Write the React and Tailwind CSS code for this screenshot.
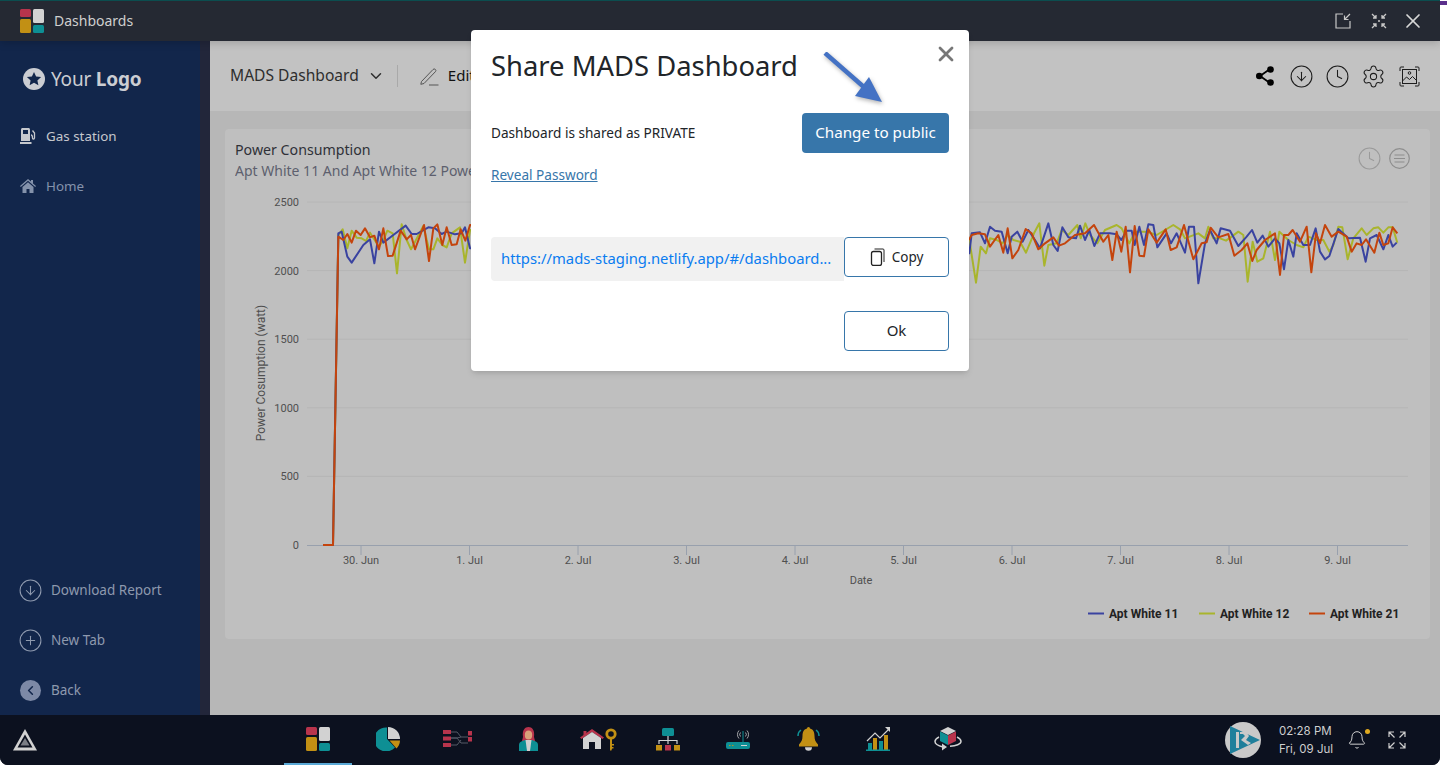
import React from "react";
import { ChevronDown, Clock, CircleArrowDown, Settings, CirclePlus, ChevronLeft, Bell, X } from "lucide-react";

const conv = (pts, ox) => pts.map(([x, y]) => [ox + x / 3, 190 + y / 3]);
const L = {
  orange: [[325,140],[340,150],[352,132],[365,158],[378,122],[392,135],[405,115],[420,142],[433,137],[447,178],[460,115],[474,198],[488,197],[512,122],[530,148],[543,135],[555,178],[582,105],[597,213],[610,115],[622,103],[637,165],[650,112],[665,165],[680,163],[692,118],[706,152],[720,105]],
  blue: [[325,130],[335,125],[352,200],[365,218],[400,165],[420,148],[433,220],[447,125],[460,158],[490,135],[527,107],[545,132],[560,132],[595,112],[615,115],[635,132],[650,125],[675,133],[695,130],[705,112],[720,175]],
  green: [[325,135],[338,118],[352,175],[365,122],[380,143],[395,145],[408,153],[420,128],[447,170],[460,150],[472,122],[488,130],[501,250],[515,103],[530,150],[543,178],[558,150],[580,108],[597,178],[610,178],[622,145],[637,165],[650,172],[665,130],[690,112],[705,218],[720,120]],
};
const R = {
  orange: [[28,148],[35,135],[55,130],[75,133],[90,170],[115,135],[130,188],[143,115],[157,205],[175,180],[197,117],[215,130],[235,178],[255,160],[280,142],[297,167],[315,160],[345,135],[375,130],[402,105],[430,155],[445,135],[457,210],[470,125],[484,185],[497,110],[510,247],[524,108],[538,197],[552,199],[565,118],[590,158],[617,118],[632,180],[650,172],[672,105],[700,208],[725,160],[740,157],[752,113],[775,142],[805,132],[823,197],[845,180],[862,160],[877,213],[890,180],[915,150],[945,130],[960,255],[972,135],[985,135],[998,120],[1020,155],[1040,110],[1054,247],[1068,130],[1080,160],[1095,105],[1115,140],[1135,125],[1160,140],[1175,185],[1190,160],[1205,165],[1218,148],[1243,188],[1258,128],[1270,165],[1285,160],[1298,112],[1312,130]],
  blue: [[28,190],[35,130],[60,127],[75,160],[90,110],[105,122],[125,125],[143,190],[155,140],[172,125],[188,155],[205,120],[225,150],[240,175],[265,100],[280,165],[293,183],[307,112],[325,142],[348,145],[360,107],[375,150],[388,120],[403,168],[420,130],[450,130],[470,133],[484,150],[500,122],[515,122],[524,165],[538,110],[552,165],[565,103],[580,105],[592,172],[620,130],[633,160],[650,130],[675,188],[687,110],[702,110],[715,280],[735,160],[750,120],[770,160],[782,115],[810,122],[835,168],[860,140],[876,120],[892,158],[908,137],[925,170],[945,145],[958,160],[972,238],[985,150],[1000,200],[1010,130],[1030,165],[1050,165],[1067,115],[1080,185],[1095,208],[1108,198],[1135,117],[1165,145],[1200,143],[1217,215],[1230,145],[1250,135],[1270,178],[1285,135],[1298,170],[1310,158]],
  green: [[28,150],[48,278],[62,170],[78,190],[90,145],[110,150],[128,160],[143,135],[160,150],[180,155],[198,188],[222,130],[238,100],[253,227],[265,165],[290,160],[305,120],[325,135],[352,105],[362,145],[376,100],[390,135],[412,160],[435,120],[470,105],[485,115],[508,160],[525,125],[560,125],[590,135],[640,105],[660,118],[675,145],[715,130],[735,145],[745,110],[760,145],[780,145],[798,152],[815,140],[835,125],[850,135],[863,275],[878,155],[892,215],[910,205],[930,125],[945,210],[958,125],[985,150],[1010,165],[1030,172],[1045,140],[1070,150],[1090,150],[1108,185],[1120,165],[1135,110],[1147,112],[1163,208],[1180,145],[1205,115],[1220,135],[1240,115],[1255,112],[1270,128],[1285,112],[1298,112],[1312,158]],
};
const series = (k) => {
  const start = [[323, 545], [333, 545]];
  return [...start, ...conv(L[k], 230), ...conv(R[k], 960)].map((p) => p.join(",")).join(" ");
};

function Chart() {
  const grid = [[2500, 202], [2000, 270.6], [1500, 339.2], [1000, 407.8], [500, 476.4]];
  const ticks = ["30. Jun", "1. Jul", "2. Jul", "3. Jul", "4. Jul", "5. Jul", "6. Jul", "7. Jul", "8. Jul", "9. Jul"];
  const lab = { fontFamily: "Roboto, sans-serif", fontSize: 11, fill: "#4f4f4f" };
  return (
    <svg viewBox="225 190 1205 449" width="1205" height="449" className="block">
      {grid.map(([v, y]) => (
        <g key={v}>
          <line x1="307" x2="1408" y1={y} y2={y} stroke="#b6b6b6" strokeWidth="1" />
          <text x="299" y={y + 4} textAnchor="end" {...lab}>{v}</text>
        </g>
      ))}
      <text x="299" y="549" textAnchor="end" {...lab}>0</text>
      <line x1="307" x2="1408" y1="545.5" y2="545.5" stroke="#98a0ad" strokeWidth="1" />
      {ticks.map((t, i) => {
        const x = 361 + i * 108.5;
        return (
          <g key={t}>
            <line x1={x} x2={x} y1="545" y2="555" stroke="#98a0ad" strokeWidth="1" />
            <text x={x} y="564" textAnchor="middle" {...lab}>{t}</text>
          </g>
        );
      })}
      <text x="861" y="584" textAnchor="middle" {...lab}>Date</text>
      <text transform="translate(265 373) rotate(-90)" textAnchor="middle" {...lab} fontSize="12">Power Cosumption (watt)</text>
      <polyline points={series("green")} fill="none" stroke="#a9b52c" strokeWidth="2" strokeLinejoin="round" />
      <polyline points={series("blue")} fill="none" stroke="#3a43a0" strokeWidth="2" strokeLinejoin="round" />
      <polyline points={series("orange")} fill="none" stroke="#c4440d" strokeWidth="2" strokeLinejoin="round" />
      {[[1088, "#3a43a0", "Apt White 11"], [1199, "#a9b52c", "Apt White 12"], [1309, "#c4440d", "Apt White 21"]].map(([x, c, t]) => (
        <g key={t}>
          <line x1={x} x2={x + 16} y1="613.5" y2="613.5" stroke={c} strokeWidth="2" />
          <text x={x + 21} y="618" fontFamily="Roboto, sans-serif" fontSize="12" fontWeight="700" fill="#222">{t}</text>
        </g>
      ))}
    </svg>
  );
}

const DashIcon = ({ s = 24 }) => (
  <svg width={s} height={s} viewBox="0 0 24 24">
    <rect x="0" y="0" width="11" height="8" rx="1.500" fill="#b8344c" />
    <rect x="0" y="10" width="11" height="14" rx="1.500" fill="#c29014" />
    <rect x="13" y="0" width="11" height="14" rx="1.500" fill="#d2d2d2" />
    <rect x="13" y="16" width="11" height="8" rx="1.500" fill="#0e8f94" />
  </svg>
);
const Pie = () => (
  <svg width="24" height="24" viewBox="0 0 24 24">
    <path d="M11 0.500V12l8 8.500A12 12 0 1 1 11 0.500Z" fill="#0e8f94" />
    <path d="M12 0a12 12 0 0 1 12 12H12Z" fill="#d2d2d2" />
    <path d="M13.500 13.500H24a12 12 0 0 1-3.500 8Z" fill="#c29014" />
  </svg>
);
const Flow = () => (
  <svg width="30" height="18" viewBox="0 0 30 18">
    <g fill="none" stroke="#555a66" strokeWidth="1">
      <path d="M8 2h6l4 5h7M8 8h6l4-1M8 8h6l4 5h7M8 15h6l4-5" />
    </g>
    <g fill="#b8344c">
      <rect x="0" y="0" width="8" height="4" />
      <rect x="0" y="6.500" width="8" height="4" />
      <rect x="0" y="13" width="8" height="4" />
      <rect x="25" y="1" width="4" height="4.500" />
      <rect x="25" y="7" width="4" height="4.500" />
    </g>
  </svg>
);
const Woman = () => (
  <svg width="19" height="24" viewBox="0 0 19 24">
    <path d="M4 10C3 3 6 0 9.500 0S16 3 15 10l1 4H3Z" fill="#b8344c" />
    <ellipse cx="9.500" cy="8" rx="3.700" ry="4.500" fill="#d9a27a" />
    <path d="M0 24v-6c0-3 3-4 6-5h7c3 1 6 2 6 5v6Z" fill="#0e8f94" />
    <path d="M6.500 13h6L11 24H8Z" fill="#d2d2d2" />
  </svg>
);
const HomeKey = () => (
  <svg width="37" height="24" viewBox="0 0 37 24">
    <path d="M0 10.500 12 2l12 8.500-1.500 1.500L12 5 1.500 12Z" fill="#b8344c" />
    <path d="M3 11 12 5l9 6v11h-6v-7H9v7H3Z" fill="#d2d2d2" />
    <path d="M3.500 4h3v2.500l-3 2.200Z" fill="#b8344c" />
    <circle cx="31" cy="7" r="4.200" fill="none" stroke="#c29014" strokeWidth="2.800" />
    <path d="M30 11h2v11l-1 2-1-1Zm2 6h2v1.500h-2Zm0 3h1.500v1.500H32Z" fill="#c29014" />
  </svg>
);
const Org = () => (
  <svg width="24" height="23" viewBox="0 0 24 23">
    <rect x="6" y="0" width="12" height="8" rx="1.500" fill="#0e8f94" />
    <path d="M12 8v8M3 16v-3.500h18V16" stroke="#d2d2d2" strokeWidth="1.200" fill="none" />
    <rect x="0" y="17" width="6" height="5.500" fill="#c29014" />
    <rect x="9" y="17" width="6" height="5.500" fill="#b8344c" />
    <rect x="18" y="17" width="6" height="5.500" fill="#c29014" />
  </svg>
);
const Router = () => (
  <svg width="24" height="20" viewBox="0 0 24 20">
    <rect x="0" y="13" width="24" height="7" rx="2" fill="#0e8f94" />
    <path d="M17 2v11" stroke="#0e8f94" strokeWidth="1" />
    <g fill="none" stroke="#c8c8c8" strokeWidth="0.800">
      <path d="M14.500 3.500a3 3 0 0 0 0 4M19.500 3.500a3 3 0 0 1 0 4M13 1.500a6 6 0 0 0 0 8M21 1.500a6 6 0 0 1 0 8" />
    </g>
    <path d="M15 16.500h6" stroke="#d2d2d2" strokeWidth="1" />
    <path d="M3 16.500h1.500M6 16.500h1.500" stroke="#c29014" strokeWidth="1" />
  </svg>
);
const AlarmBell = () => (
  <svg width="23" height="24" viewBox="0 0 23 24">
    <path d="M1 9a7 7 0 0 1 3-6M22 9a7 7 0 0 0-3-6" fill="none" stroke="#0e8f94" strokeWidth="1.500" />
    <path d="M11.500 0c1 0 1.500 .8 1.500 1.600 3.500 .8 4.500 4 4.500 7.400 0 4 1 5.500 3.500 8.500v2H2v-2C4.500 14.500 5.500 13 5.500 9c0-3.400 1-6.600 4.500-7.400 0-.8 .5-1.600 1.500-1.600Z" fill="#c29014" />
    <path d="M8 20.200h7a3.500 3.500 0 0 1-7 0Z" fill="#d2d2d2" />
  </svg>
);
const Growth = () => (
  <svg width="24" height="24" viewBox="0 0 24 24">
    <path d="M1 14 9 6l5 5 9-9" fill="none" stroke="#d2d2d2" strokeWidth="1.200" />
    <path d="M19 0h5v5Z" fill="#d2d2d2" />
    <rect x="2" y="16" width="4" height="7" fill="#0e8f94" />
    <rect x="7" y="11" width="4" height="12" fill="#c29014" />
    <rect x="13" y="14" width="4" height="9" fill="#0e8f94" />
    <rect x="18" y="8" width="4" height="15" fill="#c29014" />
    <rect x="0" y="22.500" width="24" height="1.500" fill="#0e8f94" />
  </svg>
);
const Cube = () => (
  <svg width="28" height="24" viewBox="0 0 28 24">
    <path d="M14 0 22 4 14 8 6 4Z" fill="#d2d2d2" />
    <path d="M6 4.500 14 8.500V18L6 14Z" fill="#0e8f94" />
    <path d="M22 4.500 14 8.500V18l8-4Z" fill="#b8344c" />
    <path d="M5 10C2 11.500 1 13 1 14.500 1 17 5 19 9 20M23 10c3 1.500 4 3 4 4.500 0 2.500-5 4.500-11 4.800" fill="none" stroke="#d2d2d2" strokeWidth="1.500" />
    <path d="M8 16.500 13 20 8 23.500Z" fill="#d2d2d2" />
  </svg>
);

const Tab = ({ active, children }) => (
  <div className={`h-full w-[68px] flex items-center justify-center border-b-2 ${active ? "border-[#5aa9d6]" : "border-transparent"}`}>
    {children}
  </div>
);

const SideItem = ({ icon, label, className = "" }) => (
  <div className={`h-[50px] flex items-center pl-5 ${className}`}>
    {icon}
    <span>{label}</span>
  </div>
);

export default function App() {
  const font = { fontFamily: '"Noto Sans", sans-serif' };
  return (
    <div className="relative w-[1447px] h-[768px] bg-white overflow-hidden" style={font}>
      <div className="absolute right-0 top-[1px] w-[7px] h-[4px] bg-[#5b2f8c]" />
      <div className="w-[1440px] h-[765px] flex flex-col rounded-b-[8px] overflow-hidden bg-[#0c111f]">
        <div className="h-[41px] shrink-0 bg-[#252933] border-t border-[#0b4d4f] flex items-center pl-5 pb-[1px] text-[#cfcfcf] relative z-10 shadow-[0_2px_8px_rgba(0,0,0,0.18)]">
          <DashIcon />
          <span className="ml-[10px] text-[14px] pb-[1px]">Dashboards</span>
          <div className="ml-auto flex items-center">
            <svg width="16" height="16" viewBox="0 0 16 16" fill="none" stroke="#c8c8c8" strokeWidth="1.200">
              <path d="M8 1H1v14h14V8M15 1 9.500 6.500M9.500 2.500v4h4" />
            </svg>
            <svg width="16" height="16" viewBox="0 0 16 16" fill="none" stroke="#c8c8c8" strokeWidth="1.300" className="ml-[20px]">
              <path d="M1 1l4 4M5 2v3H2M15 1l-4 4M11 2v3h3M1 15l4-4M5 14v-3H2M15 15l-4-4M11 14v-3h3" />
              <circle cx="8" cy="8" r="1" fill="#c8c8c8" stroke="none" />
            </svg>
            <X size={24} color="#d8d8d8" strokeWidth={1.700} className="ml-[14px] mr-[15px]" />
          </div>
        </div>

        <div className="flex-1 flex min-h-0">
          <aside className="w-[200px] shrink-0 bg-[#12264b] flex flex-col">
            <div className="h-[70px] flex items-center pl-[23px] pt-[6px] text-[#cbcdd2] text-[19px] gap-[6px]">
              <svg width="22" height="22" viewBox="0 0 22 22">
                <circle cx="11" cy="11" r="11" fill="#cbcdd2" />
                <path d="M11 4l2.100 4.600 5 .5-3.700 3.300 1 4.900L11 14.800l-4.400 2.500 1-4.900L3.900 9.100l5-.5Z" fill="#12264b" />
              </svg>
              <span className="tracking-[-0.2px]">Your <b className="font-bold">Logo</b></span>
            </div>
            <SideItem
              className="text-[#c6c8cd] text-[13.400px]"
              label="Gas station"
              icon={
                <svg width="16" height="16" viewBox="0 0 16 16" className="mr-[10px]">
                  <path d="M1 1.500C1 .7 1.700 0 2.500 0h6C9.300 0 10 .7 10 1.500V13H1Z" fill="#c6c8cd" />
                  <rect x="3" y="2" width="5" height="4" fill="#12264b" />
                  <rect x="0" y="14" width="11.500" height="2" fill="#c6c8cd" />
                  <path d="M11 7c1.500 0 1.500 1.500 1.500 3s1.500 1.500 2 0V5L12.500 2.500" fill="none" stroke="#c6c8cd" strokeWidth="1.300" />
                </svg>
              }
            />
            <SideItem
              className="text-[#8492ab] text-[13.400px]"
              label="Home"
              icon={
                <svg width="16" height="14" viewBox="0 0 16 14" className="mr-[10px]">
                  <path d="M0 7 8 0l3 2.600V1h2v3.400L16 7l-.8.900L8 1.800.8 7.900Z" fill="#8492ab" />
                  <path d="M2.500 8 8 3.300 13.500 8v6H9.500v-4h-3v4h-4Z" fill="#8492ab" />
                </svg>
              }
            />
            <div className="mt-auto text-[#8e99ae] text-[13.500px]">
              <SideItem label="Download Report" icon={<CircleArrowDown size={25} strokeWidth={1} className="-ml-[2px] mr-[8px]" />} />
              <SideItem label="New Tab" icon={<CirclePlus size={25} strokeWidth={1} className="-ml-[2px] mr-[8px]" />} />
              <SideItem
                label="Back"
                icon={
                  <span className="w-[21px] h-[21px] rounded-full bg-[#7d89a6] flex items-center justify-center mr-[10px]">
                    <ChevronLeft size={15} color="#12264b" strokeWidth={2.500} />
                  </span>
                }
              />
            </div>
          </aside>
          <div className="w-[10px] shrink-0 bg-[#22263a]" />
          <main className="flex-1 bg-[#b7b7b7] flex flex-col min-w-0">
            <div className="h-[70px] shrink-0 bg-[#c2c2c2] flex items-center pl-5 pr-[20px] text-[#2e2e2e]">
              <span className="text-[15.600px] pb-[1px]">MADS Dashboard</span>
              <ChevronDown size={18} strokeWidth={2} className="ml-[8px]" />
              <div className="w-px h-[22px] bg-[#a9a9a9] ml-[12px]" />
              <svg width="19" height="19" viewBox="0 0 19 19" fill="none" stroke="#555" strokeWidth="1" className="ml-[22px]">
                <path d="M1.500 14.500 13 2.500a1.600 1.600 0 0 1 2.400 2.200L4 16.500l-3.200.8ZM9 18h9.500" />
              </svg>
              <span className="ml-[9px] text-[15px] text-[#111] pb-[1px]">Edit</span>
              <div className="ml-auto flex items-center text-[#1d1d1d]">
                <svg width="18" height="20" viewBox="0 0 18 20" fill="#000">
                  <path d="M14 3 4 10l10 7" fill="none" stroke="#000" strokeWidth="1.800" />
                  <circle cx="14.500" cy="3.500" r="3.300" />
                  <circle cx="3.300" cy="10" r="3.300" />
                  <circle cx="14.500" cy="16.500" r="3.300" />
                </svg>
                <CircleArrowDown size={25} strokeWidth={1} className="ml-[15px]" />
                <Clock size={25} strokeWidth={1} className="ml-[11px]" />
                <Settings size={25} strokeWidth={1} className="ml-[11px]" />
                <svg width="21" height="21" viewBox="0 0 21 21" fill="none" stroke="#1d1d1d" strokeWidth="1" className="ml-[13px]">
                  <path d="M1 5V2a1 1 0 0 1 1-1h3M16 1h3a1 1 0 0 1 1 1v3M20 16v3a1 1 0 0 1-1 1h-3M5 20H2a1 1 0 0 1-1-1v-3" />
                  <rect x="3.500" y="3.500" width="14" height="14" />
                  <circle cx="10.500" cy="7" r="1.300" />
                  <path d="M3.500 15l4-4 3 2.500 3-3 4 4" />
                </svg>
              </div>
            </div>
            <div className="mt-[18px] ml-[15px] w-[1205px] h-[510px] bg-[#bfbfbf] rounded-[4px]">
              <div className="h-[61px] flex justify-between px-[10px] pt-[10px]">
                <div className="w-[236px]">
                  <div className="text-[14.200px] leading-[21px] text-[#2f3138]">Power Consumption</div>
                  <div className="text-[14px] leading-[21px] text-[#5d5f6e] whitespace-nowrap overflow-hidden">Apt White 11 And Apt White 12 Power Consumption</div>
                </div>
                <div className="flex items-center h-[21px] mr-[10px] mt-[9px] text-[#9a9a9a]">
                  <Clock size={25} strokeWidth={1} />
                  <svg width="21" height="21" viewBox="0 0 21 21" fill="none" stroke="#8e8e8e" strokeWidth="1.200" className="ml-[7px]">
                    <circle cx="10.500" cy="10.500" r="9.800" />
                    <path d="M5.500 7h10M5 10.500h11M5.500 14h10" />
                  </svg>
                </div>
              </div>
              <Chart />
            </div>
          </main>
        </div>

        <footer className="h-[50px] shrink-0 bg-[#0c111f] flex items-center">
          <div className="w-[284px] pl-[13px] shrink-0">
            <svg width="24" height="22" viewBox="0 0 24 22">
              <path d="M12 0 24 21.500H0Z" fill="#d2d2d2" />
              <path d="M12 5.500 19.500 18.500H4.500Z" fill="#0c111f" />
              <path d="M12 9 16.500 16.500H7.500Z" fill="#7a7d85" />
            </svg>
          </div>
          <div className="flex h-full gap-[2px]">
            <Tab active><DashIcon /></Tab>
            <Tab><Pie /></Tab>
            <Tab><Flow /></Tab>
            <Tab><Woman /></Tab>
            <Tab><HomeKey /></Tab>
            <Tab><Org /></Tab>
            <Tab><Router /></Tab>
            <Tab><AlarmBell /></Tab>
            <Tab><Growth /></Tab>
            <Tab><Cube /></Tab>
          </div>
          <div className="ml-[243px] flex items-center text-[#cfcfcf]">
            <svg width="36" height="36" viewBox="0 0 36 36">
              <circle cx="18" cy="18" r="18" fill="#c9c9c9" />
              <path d="M5 4 L35 18 L5 32 Z" fill="#1f7f9b" />
              <path d="M11 10h3v16h-3ZM15 10h6l3 4-3 4 5 3-3 2-7-5 4-4-2-2h-3Z" fill="#c9c9c9" />
            </svg>
            <div className="ml-[18px] text-[11.500px] leading-[18px] w-[56px] whitespace-nowrap" style={{ fontFamily: "Inter, sans-serif" }}>
              <div>02:28 PM</div>
              <div>Fri, 09 Jul</div>
            </div>
            <div className="relative ml-[12px]">
              <Bell size={20} strokeWidth={1.200} />
              <span className="absolute -top-[1px] -right-[3px] w-[5px] h-[5px] rounded-full bg-[#e0a91f]" />
            </div>
            <svg width="18" height="18" viewBox="0 0 18 18" fill="none" stroke="#cfcfcf" strokeWidth="1.200" className="ml-[21px]">
              <path d="M1 6V1h5M1 1l5.500 5.500M12 1h5v5M17 1l-5.500 5.500M1 12v5h5M1 17l5.500-5.500M12 17h5v-5M17 17l-5.500-5.500" />
            </svg>
          </div>
        </footer>
      </div>

      <div className="absolute z-20 left-[471px] top-[30px] w-[498px] h-[341px] bg-white rounded-[4px] shadow-md px-5 pt-[18px] pb-5 text-[#212529]">
        <div className="text-[27.400px] leading-[36px]">Share MADS Dashboard</div>
        <div className="mt-[29px] flex items-center justify-between">
          <span className="text-[13.600px] pt-[1px]">Dashboard is shared as PRIVATE</span>
          <button className="w-[147px] h-[40px] rounded-[4px] bg-[#3776aa] text-white text-[15.200px] pb-[2px]">Change to public</button>
        </div>
        <div className="mt-[12px] text-[13.600px] leading-[20px] text-[#3776aa] underline">Reveal Password</div>
        <div className="mt-[52px] flex items-start">
          <div className="w-[353px] h-[44px] bg-[#f1f1f1] rounded-l-[4px] px-[10px] pb-[2px] flex items-center text-[14.800px] text-[#0a7cf0] whitespace-nowrap overflow-hidden">
            https://mads-staging.netlify.app/#/dashboard...
          </div>
          <button className="w-[105px] h-[40px] border border-[#3776aa] rounded-[4px] bg-white flex items-center justify-center gap-[4px] text-[13.500px]">
            <svg width="18" height="18" viewBox="0 0 18 18" fill="none" stroke="#222" strokeWidth="1">
              <rect x="1.500" y="3.500" width="10" height="14" rx="2" strokeWidth="1.300" />
              <path d="M4.500 1h8.500a1 1 0 0 1 1 1v12" />
            </svg>
            Copy
          </button>
        </div>
        <div className="mt-[30px] flex justify-end">
          <button className="w-[105px] h-[40px] border border-[#3776aa] rounded-[4px] bg-white text-[15px] pb-[2px]">Ok</button>
        </div>
        <X size={24} color="#777" strokeWidth={2.800} className="absolute right-[11px] top-[12px]" />
        <svg width="70" height="60" viewBox="0 0 70 60" className="absolute left-[350px] top-[22px]" style={{ filter: "drop-shadow(1px 2px 2px rgba(0,0,0,.3))" }}>
          <path d="M4 1 44 36" stroke="#4472c4" strokeWidth="4.500" fill="none" />
          <path d="M61 50 48 25 34 44Z" fill="#4472c4" />
        </svg>
      </div>
    </div>
  );
}
